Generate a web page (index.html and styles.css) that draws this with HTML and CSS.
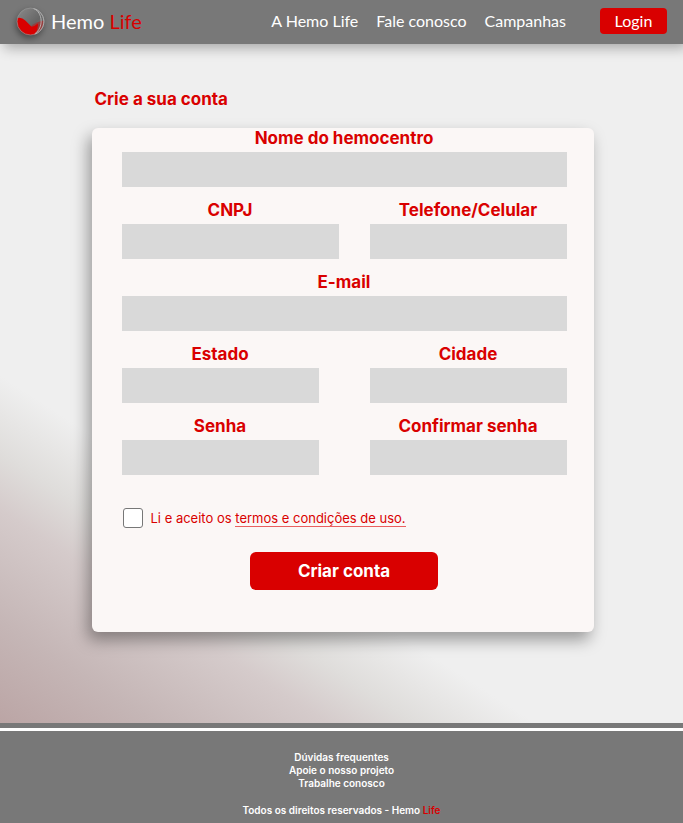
FILE: index.html
```html
<!DOCTYPE html>
<html lang="pt-BR">
<head>
  <meta charset="utf-8">
  <meta name="viewport" content="width=device-width, initial-scale=1">
  <title>Hemo Life - Crie a sua conta</title>
  <link rel="stylesheet" href="styles.css">
</head>
<body>
  <header class="topbar">
    <a class="brand" href="#">
      <svg class="logo" viewBox="0 0 28 28" aria-hidden="true">
        <defs>
          <linearGradient id="glass" x1="0" y1="0" x2="1" y2="1">
            <stop offset="0" stop-color="#8b8b8b"/>
            <stop offset=".6" stop-color="#666"/>
            <stop offset="1" stop-color="#777"/>
          </linearGradient>
          <clipPath id="drop"><circle cx="14" cy="14" r="13"/></clipPath>
        </defs>
        <circle cx="14" cy="14" r="13" fill="url(#glass)"/>
        <g clip-path="url(#drop)">
          <path d="M14 19Q20 14 28 13V28H10Z" fill="#963e3e"/>
          <path d="M0 11Q5 9 9 13Q13 17 15 19Q18 19 21 16Q22 22 17 28H0Z" fill="#d90000"/>
        </g>
        <circle cx="14" cy="14" r="13" fill="none" stroke="#999" stroke-width=".6"/>
        <path d="M17 1.5C26 5 27 20 18 26" fill="none" stroke="#c4c4c4" stroke-width=".8"/>
        <path d="M19 2C30 8 29 21 19 26" fill="none" stroke="#b5b5b5" stroke-width=".8"/>
      </svg>
      <span class="brand-name">Hemo <span class="red">Life</span></span>
    </a>
    <nav class="nav">
      <a href="#">A Hemo Life</a>
      <a href="#">Fale conosco</a>
      <a href="#">Campanhas</a>
    </nav>
    <button class="login" type="button">Login</button>
  </header>

  <main class="page">
    <div class="content">
      <h1 class="title">Crie a sua conta</h1>
      <form class="card">
        <div class="fields">
          <div class="field full">
            <label for="nome">Nome do hemocentro</label>
            <input id="nome" type="text">
          </div>
          <div class="field">
            <label for="cnpj">CNPJ</label>
            <input id="cnpj" type="text">
          </div>
          <div class="field">
            <label for="telefone">Telefone/Celular</label>
            <input id="telefone" type="tel">
          </div>
          <div class="field full">
            <label for="email">E-mail</label>
            <input id="email" type="email">
          </div>
          <div class="field narrow">
            <label for="estado">Estado</label>
            <input id="estado" type="text">
          </div>
          <div class="field">
            <label for="cidade">Cidade</label>
            <input id="cidade" type="text">
          </div>
          <div class="field narrow">
            <label for="senha">Senha</label>
            <input id="senha" type="password">
          </div>
          <div class="field">
            <label for="confirmar">Confirmar senha</label>
            <input id="confirmar" type="password">
          </div>
        </div>
        <div class="terms">
          <input id="aceito" type="checkbox">
          <label for="aceito">Li e aceito os <a href="#">termos e condições de uso.</a></label>
        </div>
        <button class="submit" type="submit">Criar conta</button>
      </form>
    </div>
  </main>

  <footer class="footer">
    <div class="footer-content">
      <a href="#">Dúvidas frequentes</a>
      <a href="#">Apoie o nosso projeto</a>
      <a href="#">Trabalhe conosco</a>
      <p>Todos os direitos reservados - Hemo <span class="red">Life</span></p>
    </div>
  </footer>
</body>
</html>
```
FILE: styles.css
```css
* {
  box-sizing: border-box;
}

body {
  margin: 0;
  min-height: 100vh;
  display: flex;
  flex-direction: column;
  background: #efefef;
  color: #d90000;
  font-family: Inter, "Liberation Sans", sans-serif;
}

a {
  color: inherit;
  text-decoration: none;
}

button {
  border: 0;
  background: #d90000;
  color: #fff;
  cursor: pointer;
}

.red {
  color: #d90000;
}

.topbar {
  position: relative;
  display: flex;
  align-items: center;
  height: 44px;
  padding: 0 16px 2px;
  background: #787878;
  color: #fff;
  font-family: Lato, "Liberation Sans", sans-serif;
  box-shadow: 4px 4px 12px rgba(0, 0, 0, 0.3);
}

.brand {
  display: flex;
  align-items: center;
  gap: 6px;
  margin-right: auto;
  font-size: 20px;
}

.logo {
  width: 29px;
  height: 29px;
  filter: drop-shadow(-1px 3px 3px rgba(0, 0, 0, 0.4));
}

.nav {
  display: flex;
  gap: 18px;
  margin-right: 34px;
  padding-bottom: 2px;
  font-size: 16px;
}

.login {
  width: 67px;
  height: 26px;
  padding: 0 0 2px;
  border-radius: 4px;
  font: 16px Lato, "Liberation Sans", sans-serif;
}

.page {
  flex: 1;
  padding: 44px 16px 90px 18px;
  background: linear-gradient(33deg, #bba5a5 0%, #c5b6b6 9%, #d5cbcb 19%, #dfdddb 24%, #efefef 31%);
}

.content {
  max-width: 502px;
  margin: 0 auto;
}

.title {
  margin: 0 0 18px 3px;
  font-size: 17px;
  font-weight: 700;
  line-height: 22px;
}

.card {
  padding: 0 27px 42px 30px;
  border-radius: 6px;
  background: #fbf7f6;
  box-shadow: -4px 8px 16px rgba(0, 0, 0, 0.36);
}

.fields {
  display: grid;
  grid-template-columns: 217fr 197fr;
  gap: 13px 31px;
}

.field {
  display: flex;
  flex-direction: column;
  gap: 3px;
  font-size: 17px;
  font-weight: 700;
  line-height: 21px;
  text-align: center;
}

.full {
  grid-column: 1 / -1;
}

.narrow {
  margin-right: 20px;
}

.field input {
  width: 100%;
  height: 35px;
  padding: 0 8px;
  border: 0;
  background: #d9d9d9;
  font: 16px Inter, "Liberation Sans", sans-serif;
}

.terms {
  display: flex;
  align-items: center;
  gap: 8px;
  margin-top: 33px;
  font-size: 13px;
  line-height: 20px;
}

.terms input {
  appearance: none;
  width: 20px;
  height: 20px;
  margin: 0 0 0 1px;
  border: 1px solid #777;
  border-radius: 3px;
  background: #fff;
}

.terms input:checked {
  background: #d90000;
}

.terms a {
  border-bottom: 1px solid #e96060;
}

.submit {
  display: block;
  width: 188px;
  height: 38px;
  margin: 24px auto 0;
  border-radius: 6px;
  font: 700 17px Inter, "Liberation Sans", sans-serif;
}

.footer {
  padding-top: 5px;
  background: #787878;
  color: #fff;
  font-size: 10px;
  font-weight: 600;
  line-height: 13px;
}

.footer-content {
  display: flex;
  flex-direction: column;
  align-items: center;
  padding: 20px 0 6px;
  border-top: 3px solid #fff;
}

.footer p {
  margin: 14px 0 0;
}
```
